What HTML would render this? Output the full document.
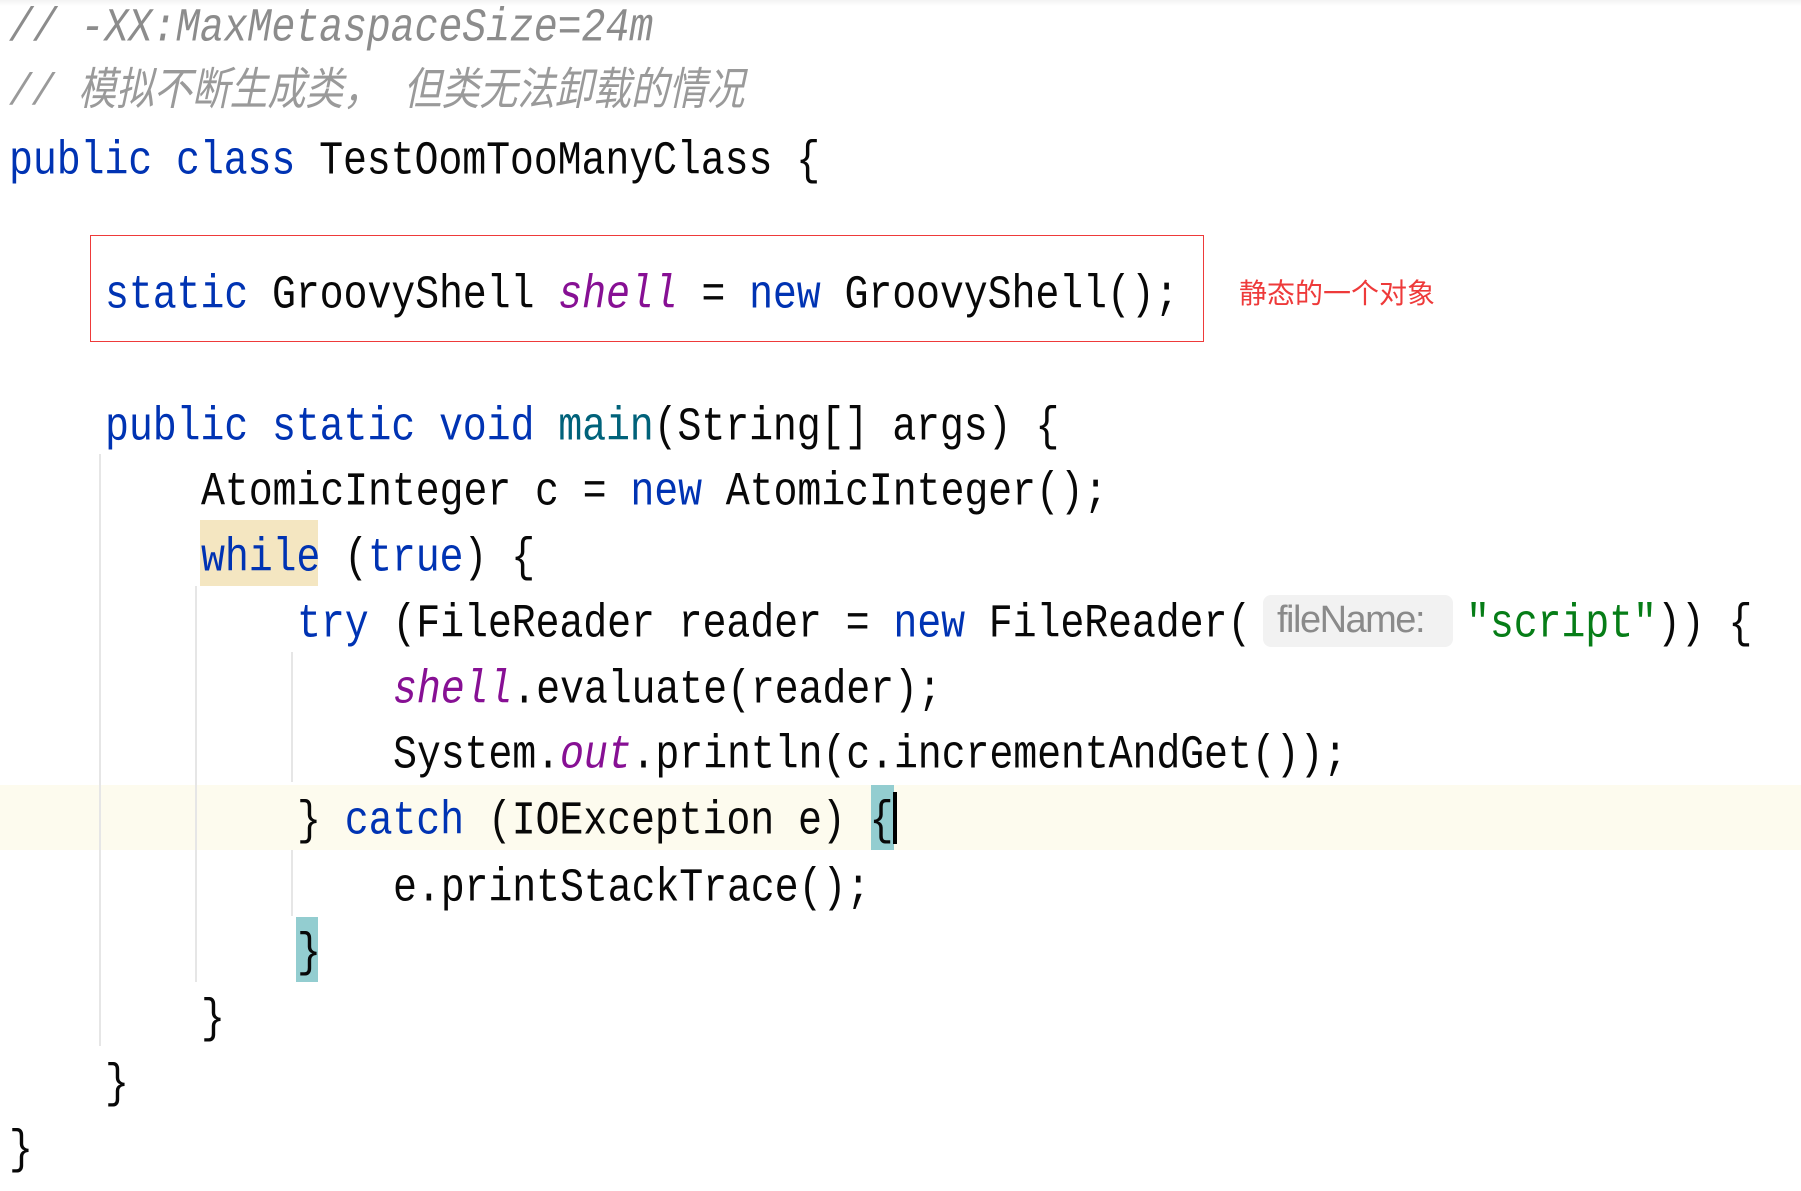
<!DOCTYPE html>
<html><head><meta charset="utf-8"><style>
html,body{margin:0;padding:0;width:1801px;height:1180px;overflow:hidden;background:#fff;}
.l{position:absolute;height:66px;line-height:66px;white-space:pre;font-family:"Liberation Mono","Noto Sans CJK SC",monospace;font-size:40px;letter-spacing:-0.15px;color:#080808;transform:scaleY(1.18);transform-origin:left center;}
.k{color:#0033b3}.p{color:#871094;font-style:italic}.s{color:#067d17}
.c{color:#8c8c8c;font-style:italic}
.g{position:absolute;width:2px;background:#e6e6e6}
</style></head><body>
<div style="position:absolute;left:0;top:0;width:1801px;height:6px;background:linear-gradient(#f3f3f3,#fff)"></div>
<div style="position:absolute;left:0;top:785px;width:1801px;height:65px;background:#fdfbee"></div>
<div style="position:absolute;left:200px;top:520px;width:118px;height:66px;background:#f4e6c1"></div>
<div style="position:absolute;left:871px;top:785px;width:23px;height:65px;background:#93cdd0"></div>
<div style="position:absolute;left:296px;top:917px;width:22px;height:65px;background:#93cdd0"></div>
<div style="position:absolute;left:893px;top:792px;width:4px;height:52px;background:#000"></div>
<div class="g" style="left:99px;top:454px;height:592px"></div>
<div class="g" style="left:195px;top:586px;height:396px"></div>
<div class="g" style="left:291px;top:652px;height:130px"></div>
<div class="g" style="left:291px;top:850px;height:66px"></div>
<div style="position:absolute;left:90px;top:235px;width:1114px;height:107px;border:1.5px solid #ee3a3a;box-sizing:border-box"></div>
<div style="position:absolute;left:1263px;top:595px;width:190px;height:52px;background:#f2f2f2;border-radius:8px"></div>
<div style="position:absolute;left:1277px;top:594px;height:52px;line-height:52px;font-family:'Liberation Sans',sans-serif;font-size:38px;color:#8a8a8a;letter-spacing:-1.5px">fileName:</div>
<div style="position:absolute;left:1239px;top:276px;height:36px;line-height:36px;font-family:'Liberation Sans','Noto Sans CJK SC',sans-serif;font-size:28px;color:#ee3a3a">静态的一个对象</div>

<div class="l c" style="left:9px;top:-3px">// -XX:MaxMetaspaceSize=24m</div>
<div class="l c" style="left:9px;top:61px;color:#9a9a9a;font-size:38px">//<span style="font-size:40px"> </span>模拟不断生成类， 但类无法卸载的情况</div>
<div class="l" style="left:9px;top:130px"><span class="k">public class</span> TestOomTooManyClass {</div>
<div class="l" style="left:105px;top:264px"><span class="k">static</span> GroovyShell <span class="p">shell</span> = <span class="k">new</span> GroovyShell();</div>
<div class="l" style="left:105px;top:396px"><span class="k">public static void</span> <span style="color:#00627a">main</span>(String[] args) {</div>
<div class="l" style="left:201px;top:461px">AtomicInteger c = <span class="k">new</span> AtomicInteger();</div>
<div class="l" style="left:201px;top:527px"><span class="k">while</span> (<span class="k">true</span>) {</div>
<div class="l" style="left:297px;top:593px"><span class="k">try</span> (FileReader reader = <span class="k">new</span> FileReader(</div>
<div class="l" style="left:1466px;top:593px"><span class="s">"script"</span>)) {</div>
<div class="l" style="left:393px;top:659px"><span class="p">shell</span>.evaluate(reader);</div>
<div class="l" style="left:393px;top:724px">System.<span class="p">out</span>.println(c.incrementAndGet());</div>
<div class="l" style="left:297px;top:790px">} <span class="k">catch</span> (IOException e) {</div>
<div class="l" style="left:393px;top:857px">e.printStackTrace();</div>
<div class="l" style="left:297px;top:922px">}</div>
<div class="l" style="left:201px;top:988px">}</div>
<div class="l" style="left:105px;top:1053px">}</div>
<div class="l" style="left:9px;top:1119px">}</div>
</body></html>
